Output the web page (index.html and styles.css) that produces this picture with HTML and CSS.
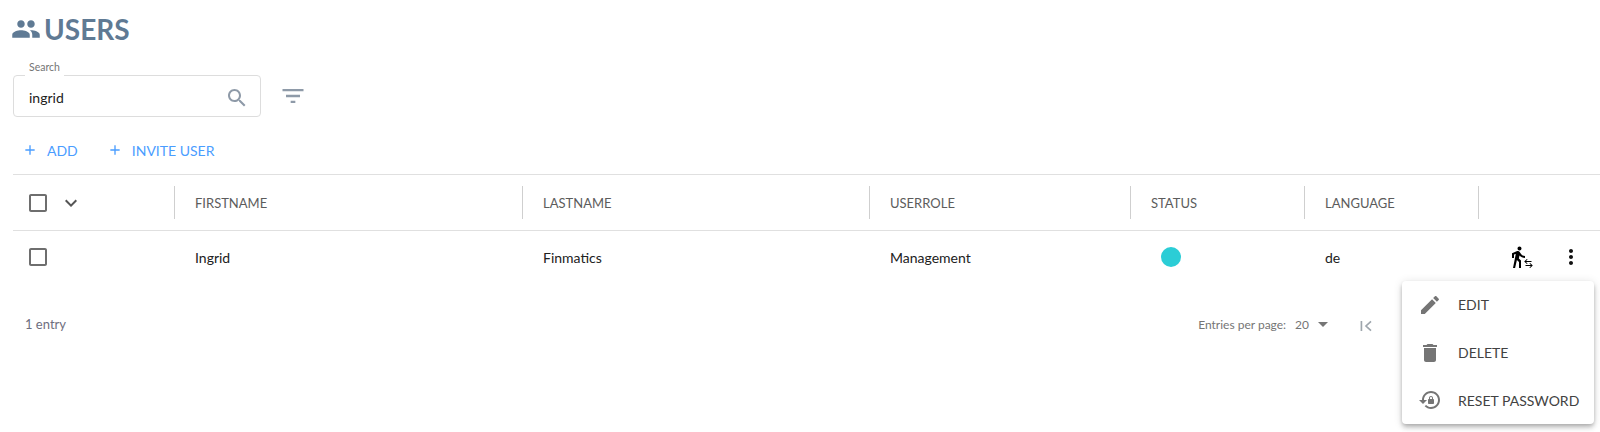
FILE: index.html
```html
<!DOCTYPE html>
<html lang="en">

<head>
    <meta charset="UTF-8">
    <title>Users</title>
    <link rel="stylesheet" href="styles.css">
</head>

<body>
    <div class="page">
        <h1 class="page-title">
            <svg class="title-icon" viewBox="0 0 24 24"><path d="M16 11c1.66 0 2.99-1.34 2.99-3S17.66 5 16 5c-1.66 0-3 1.34-3 3s1.34 3 3 3zm-8 0c1.66 0 2.99-1.34 2.99-3S9.66 5 8 5C6.34 5 5 6.34 5 8s1.34 3 3 3zm0 2c-2.33 0-7 1.17-7 3.5V19h14v-2.5c0-2.33-4.67-3.5-7-3.5zm8 0c-.29 0-.62.02-.97.05 1.16.84 1.97 1.97 1.97 3.45V19h6v-2.5c0-2.33-4.67-3.5-7-3.5z"/></svg>
            <span>USERS</span>
        </h1>

        <div class="search-row">
            <div class="search-field">
                <span class="search-label">Search</span>
                <span class="search-value">ingrid</span>
                <svg class="search-icon" viewBox="0 0 24 24"><path d="M15.5 14h-.79l-.28-.27C15.41 12.59 16 11.11 16 9.5 16 5.91 13.09 3 9.5 3S3 5.91 3 9.5 5.91 16 9.5 16c1.61 0 3.09-.59 4.23-1.57l.27.28v.79l5 4.99L20.49 19l-4.99-5zm-6 0C7.01 14 5 11.99 5 9.5S7.01 5 9.5 5 14 7.01 14 9.5 11.99 14 9.5 14z"/></svg>
            </div>
            <svg class="filter-icon" viewBox="0 0 24 24"><path d="M10 18h4v-2h-4v2zM3 6v2h18V6H3zm3 7h12v-2H6v2z"/></svg>
        </div>

        <div class="actions">
            <a class="action">
                <svg viewBox="0 0 24 24"><path d="M19 13h-6v6h-2v-6H5v-2h6V5h2v6h6v2z"/></svg>
                <span>ADD</span>
            </a>
            <a class="action">
                <svg viewBox="0 0 24 24"><path d="M19 13h-6v6h-2v-6H5v-2h6V5h2v6h6v2z"/></svg>
                <span>INVITE USER</span>
            </a>
        </div>

        <div class="table">
            <div class="row head-row">
                <div class="cell select-cell">
                    <svg class="checkbox" viewBox="0 0 24 24"><path d="M19 5v14H5V5h14m0-2H5c-1.1 0-2 .9-2 2v14c0 1.1.9 2 2 2h14c1.1 0 2-.9 2-2V5c0-1.1-.9-2-2-2z"/></svg>
                    <svg class="chevron" viewBox="0 0 24 24"><path d="M16.59 8.59L12 13.17 7.41 8.59 6 10l6 6 6-6z"/></svg>
                </div>
                <div class="cell head-cell">FIRSTNAME</div>
                <div class="cell head-cell">LASTNAME</div>
                <div class="cell head-cell">USERROLE</div>
                <div class="cell head-cell">STATUS</div>
                <div class="cell head-cell">LANGUAGE</div>
                <div class="cell head-cell"></div>
            </div>
            <div class="row body-row">
                <div class="cell select-cell">
                    <svg class="checkbox" viewBox="0 0 24 24"><path d="M19 5v14H5V5h14m0-2H5c-1.1 0-2 .9-2 2v14c0 1.1.9 2 2 2h14c1.1 0 2-.9 2-2V5c0-1.1-.9-2-2-2z"/></svg>
                </div>
                <div class="cell">Ingrid</div>
                <div class="cell">Finmatics</div>
                <div class="cell">Management</div>
                <div class="cell"><span class="status-dot"></span></div>
                <div class="cell">de</div>
                <div class="cell row-actions">
                    <svg class="impersonate" viewBox="0 0 24 24">
                        <path transform="translate(-3 0)" d="M13.5 5.5c1.1 0 2-.9 2-2s-.9-2-2-2-2 .9-2 2 .9 2 2 2zM9.8 8.9L7 23h2.1l1.8-8 2.1 2v6h2v-7.5l-2.1-2 .6-3C14.8 12 16.8 13 19 13v-2c-1.9 0-3.5-1-4.3-2.4l-1-1.6c-.4-.6-1-1-1.7-1-.3 0-.5.1-.8.1L6 8.3V13h2V9.6l1.8-.7"/>
                        <path d="M17 16.5h5.5v1H17l1.6 1.5-.7.6L15.2 17l2.7-2.6.7.6zM22 20.5h-5.500v1H22l-1.600 1.500.7.6 2.700-2.600-2.700-2.600-.7.6z" transform="translate(0 -0.5)"/>
                    </svg>
                    <svg class="more" viewBox="0 0 24 24"><path d="M12 8c1.1 0 2-.9 2-2s-.9-2-2-2-2 .9-2 2 .9 2 2 2zm0 2c-1.1 0-2 .9-2 2s.9 2 2 2 2-.9 2-2-.9-2-2-2zm0 6c-1.1 0-2 .9-2 2s.9 2 2 2 2-.9 2-2-.9-2-2-2z"/></svg>
                </div>
            </div>
        </div>

        <div class="table-footer">
            <span class="entry-count">1 entry</span>
            <div class="paginator">
                <span class="per-page-label">Entries per page:</span>
                <span class="per-page-value">20</span>
                <span class="per-page-arrow"></span>
                <svg class="first-page" viewBox="0 0 24 24"><path d="M6.500 6v12M18 6.500l-6 5.500 6 5.500"/></svg>
            </div>
        </div>
    </div>

    <div class="menu">
        <div class="menu-item">
            <svg viewBox="0 0 24 24"><path d="M3 17.25V21h3.75L17.81 9.94l-3.75-3.75L3 17.25zM20.71 7.04c.39-.39.39-1.02 0-1.41l-2.34-2.34c-.39-.39-1.02-.39-1.41 0l-1.83 1.83 3.75 3.75 1.83-1.83z"/></svg>
            <span>EDIT</span>
        </div>
        <div class="menu-item">
            <svg viewBox="0 0 24 24"><path d="M6 19c0 1.1.9 2 2 2h8c1.1 0 2-.9 2-2V7H6v12zM19 4h-3.500l-1-1h-5l-1 1H5v2h14V4z"/></svg>
            <span>DELETE</span>
        </div>
        <div class="menu-item">
            <svg viewBox="0 0 24 24"><path d="M13 3c-4.970 0-9 4.030-9 9H1l4 3.990L9 12H6c0-3.870 3.130-7 7-7s7 3.130 7 7-3.130 7-7 7c-1.930 0-3.680-.79-4.940-2.060l-1.420 1.420C8.270 19.990 10.510 21 13 21c4.970 0 9-4.030 9-9s-4.030-9-9-9zm2 8v-1c0-1.100-.9-2-2-2s-2 .9-2 2v1c-.55 0-1 .45-1 1v3c0 .55.45 1 1 1h4c.55 0 1-.45 1-1v-3c0-.55-.45-1-1-1zm-1 0h-2v-1c0-.55.45-1 1-1s1 .45 1 1v1z"/></svg>
            <span>RESET PASSWORD</span>
        </div>
    </div>
</body>

</html>
```

FILE: styles.css
```css
:root {
    --title-color: #5f7a94;
    --link-color: #4a9dff;
    --line-color: #e0e0e0;
    --divider-color: #cfcfcf;
    --icon-grey: #757575;
    --text-color: #212121;
    --head-text: #5c5c5c;
}

html,
body {
    height: 100%;
}

body {
    font-family: 'Lato', 'Liberation Sans', sans-serif;
    font-size: 14px;
    color: var(--text-color);
    background-color: #ffffff;
    margin: 0;
    overflow: hidden;
    position: relative;
}

.page {
    padding: 11px 0 0 13px;
}

.page-title {
    display: flex;
    align-items: center;
    gap: 3px;
    margin: 0;
    height: 36px;
    font-size: 28px;
    font-weight: 700;
    color: var(--title-color);
}

.title-icon {
    width: 30px;
    height: 30px;
    margin-left: -2px;
    fill: var(--title-color);
}

.search-row {
    display: flex;
    align-items: center;
    gap: 18px;
    margin-top: 28px;
}

.search-field {
    position: relative;
    display: flex;
    align-items: center;
    justify-content: space-between;
    box-sizing: border-box;
    width: 248px;
    height: 42px;
    padding: 0 11px 0 15px;
    border: 1px solid #dddddd;
    border-radius: 4px;
}

.search-label {
    position: absolute;
    top: -16px;
    left: 11px;
    padding: 0 4px 3px;
    font-size: 10.5px;
    line-height: 15px;
    color: #757575;
    background-color: #ffffff;
}

.search-value {
    padding-top: 2px;
}

.search-icon {
    width: 24px;
    height: 24px;
    margin-top: 3px;
    fill: #8e9aa8;
}

.filter-icon {
    width: 28px;
    height: 28px;
    fill: #8e9aa8;
}

.actions {
    display: flex;
    gap: 29px;
    margin-top: 19px;
    padding-left: 9px;
}

.action {
    display: flex;
    align-items: center;
    gap: 9px;
    height: 28px;
    color: var(--link-color);
}

.action svg {
    width: 16px;
    height: 16px;
    fill: var(--link-color);
}

.table {
    margin-top: 10px;
    border-top: 1px solid var(--line-color);
}

.row {
    display: grid;
    grid-template-columns: 161px 348px 347px 261px 174px 174px 1fr;
    align-items: center;
}

.head-row {
    height: 55px;
    border-bottom: 1px solid var(--line-color);
}

.body-row {
    height: 52px;
}

.cell {
    display: flex;
    align-items: center;
    padding-left: 21px;
}

.head-cell {
    height: 33px;
    border-left: 1px solid var(--divider-color);
    padding-left: 20px;
    font-size: 13px;
    color: var(--head-text);
}

.select-cell {
    padding-left: 13px;
}

.checkbox {
    width: 24px;
    height: 24px;
    fill: #6e6e6e;
}

.chevron {
    width: 24px;
    height: 24px;
    margin-left: 9px;
    fill: #555555;
}

.status-dot {
    width: 20px;
    height: 20px;
    margin-left: 10px;
    border-radius: 50%;
    background-color: #2bcdd6;
}

.row-actions {
    gap: 26px;
    padding-left: 31px;
}

.impersonate {
    width: 24px;
    height: 24px;
}

.more {
    width: 24px;
    height: 24px;
    fill: #111111;
}

.table-footer {
    display: flex;
    align-items: center;
    justify-content: space-between;
    margin-top: 23px;
    padding: 0 224px 0 12px;
    height: 36px;
}

.entry-count {
    font-size: 13px;
    color: #6e6e7e;
}

.paginator {
    display: flex;
    align-items: center;
    color: #757575;
    font-size: 12px;
}

.per-page-value {
    margin-left: 9px;
}

.per-page-arrow {
    width: 0;
    height: 0;
    margin-left: 9px;
    border-left: 5px solid transparent;
    border-right: 5px solid transparent;
    border-top: 5px solid #757575;
}

.first-page {
    width: 20px;
    height: 20px;
    margin: 4px 0 0 28px;
    fill: none;
    stroke: #9ea6ad;
    stroke-width: 2;
}

.menu {
    position: absolute;
    top: 281px;
    left: 1402px;
    width: 192px;
    height: 143px;
    background-color: #ffffff;
    border-radius: 4px;
    box-shadow: 0 2px 4px -1px rgba(0, 0, 0, 0.2), 0 4px 5px 0 rgba(0, 0, 0, 0.14), 0 1px 10px 0 rgba(0, 0, 0, 0.12);
}

.menu-item {
    display: flex;
    align-items: center;
    gap: 16px;
    height: 47.7px;
    padding-left: 16px;
    color: #424242;
}

.menu-item svg {
    width: 24px;
    height: 24px;
    fill: var(--icon-grey);
}
```
